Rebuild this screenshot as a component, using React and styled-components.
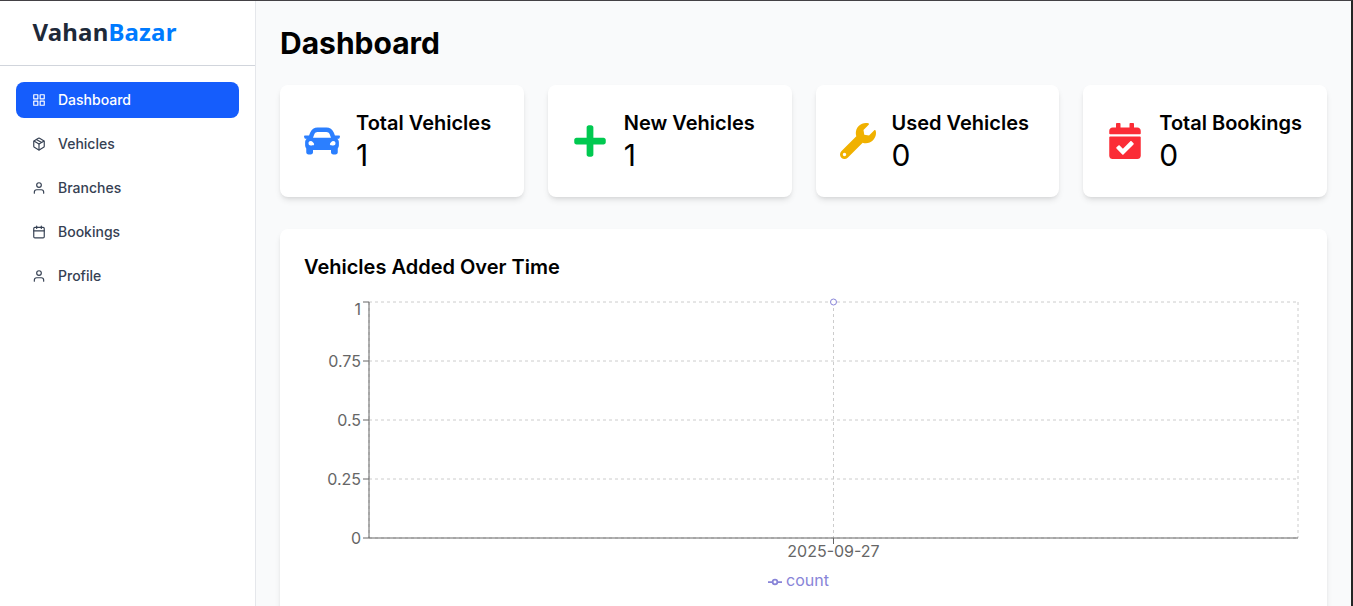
import React from "react";
import styled, { createGlobalStyle } from "styled-components";
import { FiGrid, FiPackage, FiUser, FiCalendar } from "react-icons/fi";
import { FaCar, FaPlus, FaWrench, FaCalendarCheck } from "react-icons/fa";

const GlobalStyle = createGlobalStyle`
  *, *::before, *::after { box-sizing: border-box; }
  body { margin: 0; font-family: Inter, "Liberation Sans", sans-serif; color: #000; overflow: hidden; }
  h1, h2, p { margin: 0; }
`;

const Page = styled.div`
  display: flex;
  height: 606px;
  overflow: hidden;
  background: #f9fafb;
  border-top: 1px solid #434145;
  border-right: 2px solid #252525;
`;

const Sidebar = styled.aside`
  flex: none;
  width: 256px;
  background: #fff;
  border-right: 1px solid #e5e7eb;
`;

const Brand = styled.div`
  display: flex;
  align-items: center;
  height: 65px;
  padding: 0 32px 2px 32.5px;
  border-bottom: 1px solid #d1d5dc;
  font: 700 24px/32px "Noto Sans", sans-serif;
  letter-spacing: 0.17px;
  color: #1e2939;
`;

const BrandAccent = styled.span`
  color: #007bff;
`;

const Nav = styled.nav`
  display: flex;
  flex-direction: column;
  gap: 8px;
  padding: 16px;
`;

const NavItem = styled.a`
  display: flex;
  align-items: center;
  gap: 12px;
  height: 36px;
  padding: 0 16px;
  border-radius: 8px;
  font-size: 14px;
  line-height: 20px;
  font-weight: 500;
  color: ${(p) => (p.$active ? "#fff" : "#364153")};
  background: ${(p) => (p.$active ? "#155dfc" : "transparent")};
`;

const Main = styled.main`
  flex: 1;
  min-width: 0;
  padding: 24px;
`;

const Heading = styled.h1`
  margin-bottom: 24px;
  font-size: 30px;
  line-height: 36px;
  font-weight: 700;
`;

const Stats = styled.section`
  display: grid;
  grid-template-columns: repeat(4, minmax(0, 1fr));
  gap: 24px;
  margin-bottom: 32px;
`;

const Card = styled.div`
  padding: 24px;
  border-radius: 8px;
  background: #fff;
  box-shadow: 0 4px 6px -1px rgba(0, 0, 0, 0.1), 0 2px 4px -2px rgba(0, 0, 0, 0.1);
`;

const StatCard = styled(Card)`
  display: flex;
  align-items: center;
  gap: 16px;
  height: 112px;
`;

const StatIcon = styled.span`
  display: flex;
  flex: none;
  font-size: 36px;
  color: ${(p) => p.$color};
`;

const CardTitle = styled.h2`
  font-size: 20px;
  line-height: 28px;
  font-weight: 600;
  white-space: nowrap;
`;

const StatValue = styled.p`
  font-size: 30px;
  line-height: 36px;
`;

const Chart = styled.svg`
  display: block;
  margin-top: 16px;
  font-size: 16px;
`;

const Legend = styled.div`
  display: flex;
  align-items: center;
  justify-content: center;
  gap: 4px;
  height: 24px;
  margin-top: 1px;
  padding-right: 10px;
  font-size: 16px;
  line-height: 24px;
  color: #8884d8;
`;

const LegendMark = styled.svg`
  margin-top: 3px;
`;

const navItems = [
  { label: "Dashboard", Icon: FiGrid, active: true },
  { label: "Vehicles", Icon: FiPackage },
  { label: "Branches", Icon: FiUser },
  { label: "Bookings", Icon: FiCalendar },
  { label: "Profile", Icon: FiUser },
];

const stats = [
  { label: "Total Vehicles", value: 1, Icon: FaCar, color: "#2b7fff" },
  { label: "New Vehicles", value: 1, Icon: FaPlus, color: "#00c950" },
  { label: "Used Vehicles", value: 0, Icon: FaWrench, color: "#f0b100" },
  { label: "Total Bookings", value: 0, Icon: FaCalendarCheck, color: "#fb2c36" },
];

const ticks = [
  { label: "1", y: 5, textY: 18 },
  { label: "0.75", y: 64, textY: 70 },
  { label: "0.5", y: 123, textY: 129 },
  { label: "0.25", y: 182, textY: 188 },
  { label: "0", y: 241, textY: 247 },
];

function VehiclesChart() {
  return (
    <Chart width="999" height="270" viewBox="0 0 999 270">
      <g stroke="#ccc" strokeDasharray="3 3">
        {ticks.map((t) => (
          <line key={t.label} x1="65" x2="994" y1={t.y} y2={t.y} />
        ))}
        {[65, 529.5, 994].map((x) => (
          <line key={x} x1={x} x2={x} y1="5" y2="241" />
        ))}
      </g>
      <g stroke="#666">
        <line x1="65" x2="994" y1="241" y2="241" />
        <line x1="65" x2="65" y1="5" y2="241" />
        <line x1="529.5" x2="529.5" y1="241" y2="247" />
        {ticks.map((t) => (
          <line key={t.label} x1="59" x2="65" y1={t.y} y2={t.y} />
        ))}
      </g>
      <g fill="#666" textAnchor="end">
        {ticks.map((t) => (
          <text key={t.label} x="57" y={t.textY}>{t.label}</text>
        ))}
      </g>
      <text x="529.5" y="260" fill="#666" textAnchor="middle">2025-09-27</text>
      <circle cx="529.5" cy="5" r="3" fill="#fff" stroke="#8884d8" />
    </Chart>
  );
}

export default function App() {
  return (
    <>
      <GlobalStyle />
      <Page>
        <Sidebar>
          <Brand>
            Vahan<BrandAccent>Bazar</BrandAccent>
          </Brand>
          <Nav>
            {navItems.map(({ label, Icon, active }) => (
              <NavItem key={label} $active={active}>
                <Icon size={14} />
                {label}
              </NavItem>
            ))}
          </Nav>
        </Sidebar>
        <Main>
          <Heading>Dashboard</Heading>
          <Stats>
            {stats.map(({ label, value, Icon, color }) => (
              <StatCard key={label}>
                <StatIcon $color={color}><Icon /></StatIcon>
                <div>
                  <CardTitle>{label}</CardTitle>
                  <StatValue>{value}</StatValue>
                </div>
              </StatCard>
            ))}
          </Stats>
          <Card>
            <CardTitle>Vehicles Added Over Time</CardTitle>
            <VehiclesChart />
            <Legend>
              <LegendMark width="14" height="14" viewBox="0 0 32 32" fill="none" stroke="currentColor" strokeWidth="4">
                <path d="M0,16h10.667A5.333,5.333,0,1,1,21.333,16H32M21.333,16A5.333,5.333,0,1,1,10.667,16" />
              </LegendMark>
              count
            </Legend>
          </Card>
        </Main>
      </Page>
    </>
  );
}
